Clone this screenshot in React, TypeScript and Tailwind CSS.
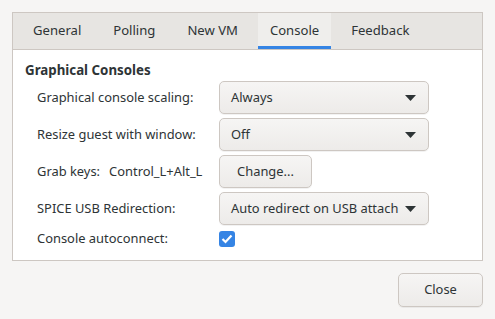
import React from "react";

const tabs = ["General", "Polling", "New VM", "Console", "Feedback"];

function Arrow() {
  return (
    <svg width="11" height="6" viewBox="0 0 11 6" className="shrink-0">
      <path d="M0 0 L11 0 L5.5 6 Z" fill="#2e3436" />
    </svg>
  );
}

function Combo({ value }: { value: string }) {
  return (
    <button className="flex h-[33px] w-[210px] items-center justify-between rounded-[5px] border border-[#cdc7c2] bg-gradient-to-b from-[#f6f5f4] to-[#edebe9] pl-[11px] pr-[12px] text-left shadow-[0_1px_0_rgba(0,0,0,0.05)]">
      <span className="whitespace-nowrap">{value}</span>
      <Arrow />
    </button>
  );
}

export default function App() {
  return (
    <div
      className="flex h-[319px] w-[495px] flex-col bg-[#f6f5f4] p-3 text-[12.9px] text-[#2e3436]"
      style={{ fontFamily: '"Noto Sans", sans-serif' }}
    >
      <div className="flex h-[249px] flex-col border border-[#cdc7c2] bg-white">
        <div className="flex h-[37px] gap-2 border-b border-[#cdc7c2] bg-[#e7e5e2] pl-[8px] text-[13.1px]">
          {tabs.map((t) => (
            <div
              key={t}
              className={
                t === "Console"
                  ? "flex items-center border-b-[3px] border-[#3584e4] bg-[#efeeec] px-3 pt-[3px]"
                  : "flex items-center px-3"
              }
            >
              {t}
            </div>
          ))}
        </div>

        <div className="flex flex-col px-3 pt-[10px]">
          <h3 className="text-[13.3px] font-bold leading-[20px]">Graphical Consoles</h3>
          <div className="mt-[1px] grid grid-cols-[182px_1fr] items-center gap-y-[4px] pl-3">
            <span>Graphical console scaling:</span>
            <Combo value="Always" />
            <span>Resize guest with window:</span>
            <Combo value="Off" />
            <span className="flex gap-[9px] whitespace-nowrap">
              <span>Grab keys:</span>
              <span>Control_L+Alt_L</span>
            </span>
            <button className="h-[33px] w-[93px] rounded-[5px] border border-[#cdc7c2] bg-gradient-to-b from-[#f6f5f4] to-[#edebe9] shadow-[0_1px_0_rgba(0,0,0,0.05)]">
              Change...
            </button>
            <span>SPICE USB Redirection:</span>
            <Combo value="Auto redirect on USB attach" />
            <span>Console autoconnect:</span>
            <div className="flex h-[20px] items-center">
              <div className="flex h-4 w-4 items-center justify-center rounded-[3px] bg-[#3584e4]">
                <svg width="12" height="10" viewBox="0 0 12 10">
                  <path
                    d="M1.5 5 L4.5 8 L10.5 1.5"
                    stroke="white"
                    strokeWidth="2.2"
                    fill="none"
                  />
                </svg>
              </div>
            </div>
          </div>
        </div>
      </div>

      <div className="mt-[12px] flex justify-end">
        <button className="h-[34px] w-[85px] rounded-[5px] border border-[#cdc7c2] bg-gradient-to-b from-[#f6f5f4] to-[#edebe9] shadow-[0_1px_0_rgba(0,0,0,0.05)]">
          Close
        </button>
      </div>
    </div>
  );
}
